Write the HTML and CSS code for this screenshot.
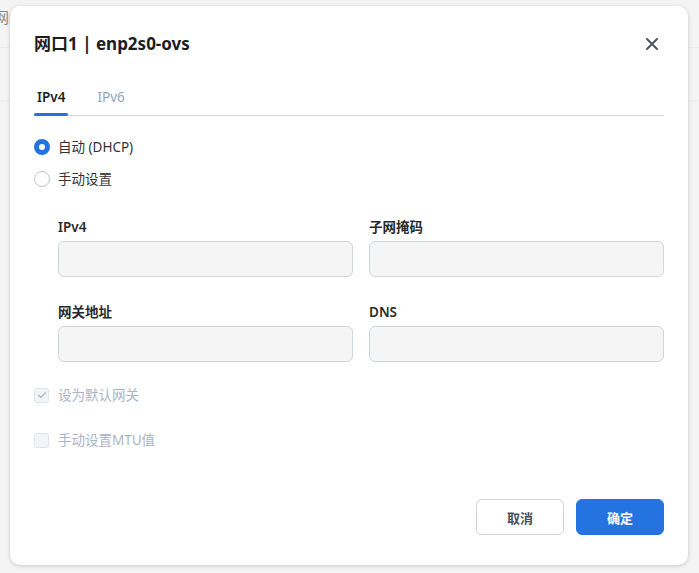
FILE: index.html
```html
<!DOCTYPE html>
<html lang="zh-CN">
<head>
  <meta charset="UTF-8" />
  <meta name="viewport" content="width=device-width, initial-scale=1.0" />
  <title>网口1 | enp2s0-ovs</title>
  <link rel="stylesheet" href="styles.css">
</head>
<body>
  <!-- page behind the dialog -->
  <div class="page">
    <div class="page-title">网络</div>
    <div class="page-rule"></div>
    <div class="page-rule second"></div>
  </div>

  <div class="modal">
    <header class="modal-head">
      <h1>网口1 | enp2s0-ovs</h1>
      <button class="close" aria-label="关闭">
        <svg width="12" height="12" viewBox="0 0 12 12"><path d="M1 1L11 11M11 1L1 11" stroke="currentColor" stroke-width="2" stroke-linecap="round"/></svg>
      </button>
    </header>

    <nav class="tabs">
      <span class="tab active">IPv4</span>
      <span class="tab">IPv6</span>
    </nav>

    <div class="radios">
      <label class="radio checked"><span class="dot"></span>自动 (DHCP)</label>
      <label class="radio"><span class="dot"></span>手动设置</label>
    </div>

    <div class="fields">
      <div class="field">
        <div class="label">IPv4</div>
        <div class="input"></div>
      </div>
      <div class="field">
        <div class="label">子网掩码</div>
        <div class="input"></div>
      </div>
      <div class="field">
        <div class="label">网关地址</div>
        <div class="input"></div>
      </div>
      <div class="field">
        <div class="label">DNS</div>
        <div class="input"></div>
      </div>
    </div>

    <div class="checks">
      <label class="check checked">
        <span class="box"><svg width="10" height="10" viewBox="0 0 10 10"><path d="M1.5 5.2L4 7.5L8.5 2.5" fill="none" stroke="currentColor" stroke-width="1.6" stroke-linecap="round" stroke-linejoin="round"/></svg></span>
        设为默认网关
      </label>
      <label class="check"><span class="box"></span>手动设置MTU值</label>
    </div>

    <footer class="modal-foot">
      <button class="btn">取消</button>
      <button class="btn primary">确定</button>
    </footer>
  </div>
</body>
</html>
```

FILE: styles.css
```css
:root{
  --blue:#2473e0;
  --text:#222;
  --muted:#a9b5c6;
  --line:#cfd6e0;
  --field:#f5f5f6;
}
*{box-sizing:border-box}
body{margin:0;background:#f4f4f5;font-family:"Noto Sans","Noto Sans CJK SC",sans-serif;color:var(--text);font-size:13px;overflow:hidden;height:573px}

.page{position:relative;height:100%}
.page-title{position:absolute;left:-6px;top:6px;font-size:15px;color:#8a8a8a}
.page-rule{position:absolute;left:0;right:0;top:47px;height:1px;background:#ebebeb}
.page-rule.second{top:100px}

.modal{position:absolute;left:10px;top:6px;width:678px;height:559px;background:#fff;border-radius:10px;box-shadow:0 1px 4px rgba(0,0,0,.18);padding:0 24px 30px;display:flex;flex-direction:column}

.modal-head{display:flex;align-items:center;justify-content:space-between;padding-top:26px;height:50px}
.modal-head h1{margin:0;font-size:17px;line-height:24px;font-weight:700;color:#1d1d1d}
.close{border:none;background:none;padding:0;margin-right:6px;color:#4b5363;display:flex;cursor:pointer}

.tabs{display:flex;gap:26px;margin-top:31px;border-bottom:1px solid #d3d9e1}
.tab{position:relative;line-height:20px;padding:0 3px 8px;font-size:13.5px;color:#94a3ba}
.tab.active{color:#222;font-weight:600}
.tab.active::after{content:"";position:absolute;left:0;right:0;bottom:-1px;height:3px;background:var(--blue);border-radius:2px}

.radios{display:flex;flex-direction:column;gap:12px;margin-top:21px}
.radio{display:flex;align-items:center;gap:8px;line-height:20px;color:#333;font-size:13.5px}
.radio .dot{width:16px;height:16px;border-radius:50%;border:1px solid #bcc6d3;background:#fff}
.radio.checked .dot{border:5px solid var(--blue)}

.fields{display:grid;grid-template-columns:1fr 1fr;column-gap:16px;row-gap:26px;margin:29px 0 0 24px}
.label{font-weight:600;line-height:18px;margin-bottom:5px;color:#2a2a2a;font-size:13.5px}
.input{height:36px;background:var(--field);border:1px solid var(--line);border-radius:6px}

.checks{display:flex;flex-direction:column;gap:25px;margin-top:23px}
.check{display:flex;align-items:center;gap:9px;line-height:20px;color:var(--muted);font-size:13.5px}
.check .box{width:15px;height:15px;border-radius:3px;border:1px solid #dfe3ea;background:#f3f4f7;display:flex;align-items:center;justify-content:center;color:#b5bfcd}

.modal-foot{margin-top:auto;display:flex;justify-content:flex-end;gap:12px}
.btn{width:88px;height:36px;border-radius:6px;border:1px solid var(--line);background:#fff;font-family:inherit;font-size:13px;font-weight:700;color:#4a4f58}
.btn.primary{background:var(--blue);border-color:var(--blue);color:#fff}
```
